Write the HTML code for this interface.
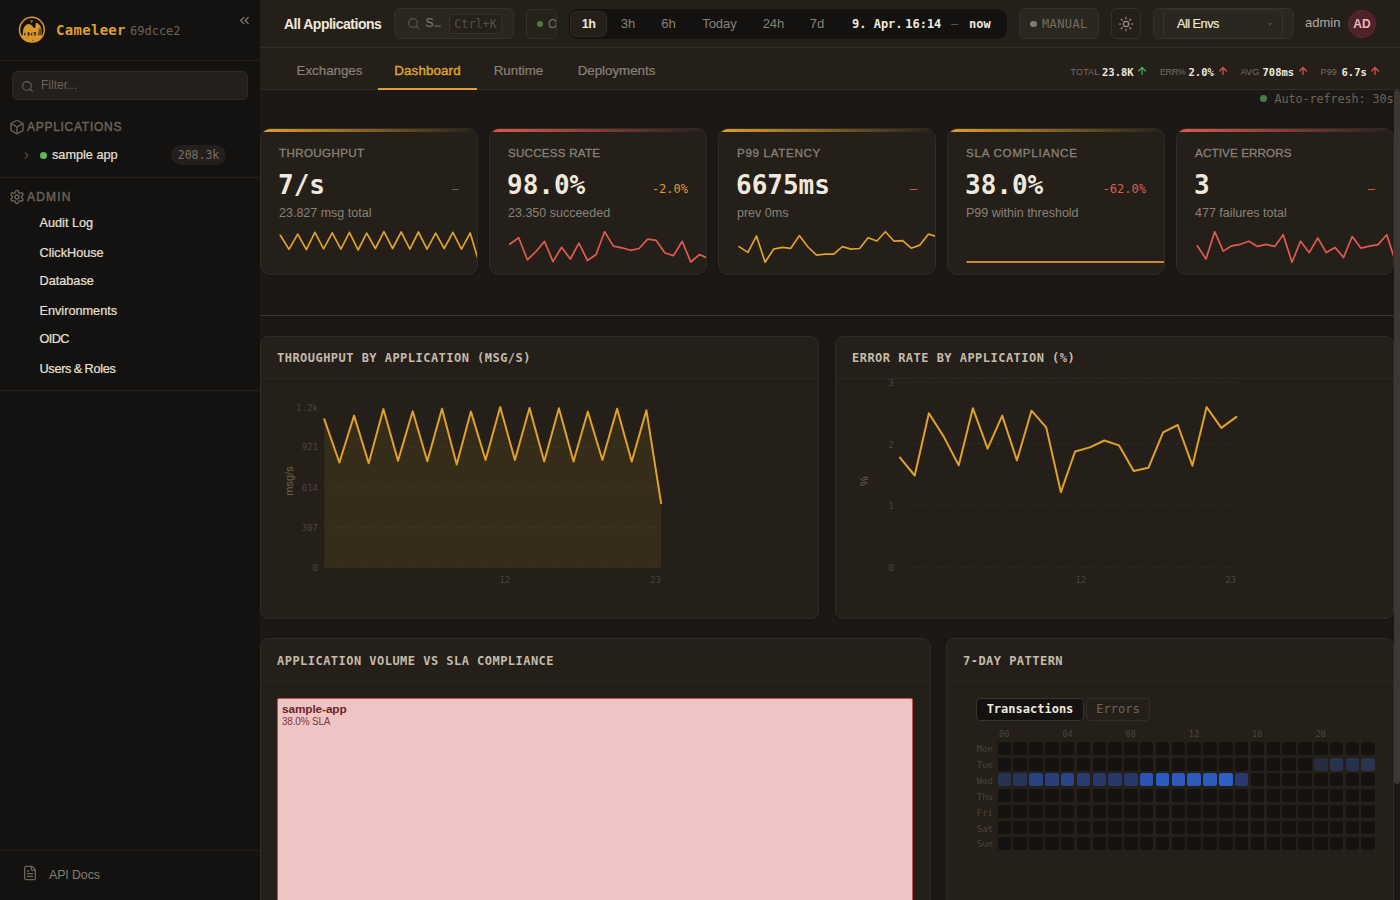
<!DOCTYPE html>
<html lang="en">
<head>
<meta charset="utf-8">
<title>Cameleer – Dashboard</title>
<style>
*{box-sizing:border-box;margin:0;padding:0}
html,body{width:1400px;height:900px;overflow:hidden;background:#1c1815;color:#f0e8dc;
  font-family:"Liberation Sans",sans-serif;font-size:13px;-webkit-font-smoothing:antialiased}
.mono{font-family:"DejaVu Sans Mono","Liberation Mono",monospace}
svg{display:block}
.abs{position:absolute}

/* ---------- sidebar ---------- */
#side{position:absolute;left:0;top:0;width:260px;height:900px;background:#141210}
#side .hdr{position:absolute;left:0;top:0;width:260px;height:61px;border-bottom:1px solid #221f1b}
#side .brand{position:absolute;left:56px;top:20px;font-size:14px;font-weight:bold;letter-spacing:.3px;color:#dfa02c;line-height:20px;white-space:nowrap}
#side .ver{position:absolute;left:130px;top:21px;font-size:12px;color:#6b6358;line-height:20px}
#side .filter{position:absolute;left:12px;top:71px;width:236px;height:29px;border:1px solid #2e2a25;border-radius:5px;background:#221f1c}
#side .filter span{position:absolute;left:28px;top:6px;font-size:12px;line-height:15px;color:#6b6358}
.sec{position:absolute;left:27px;font-size:12px;letter-spacing:1.2px;color:#6b6358;-webkit-text-stroke:.4px #6b6358;line-height:14px}
.nav{position:absolute;left:39.5px;font-size:12.7px;-webkit-text-stroke:.2px #e8e0d4;color:#e8e0d4;line-height:16px;white-space:nowrap}
.hr{position:absolute;left:0;width:260px;height:1px;background:#26221e}

/* ---------- top bar ---------- */
#top{position:absolute;left:260px;top:0;width:1140px;height:48px;background:#242019;border-bottom:1px solid #322d27}
#tabs{position:absolute;left:260px;top:48px;width:1140px;height:42px;background:#242019;border-bottom:1px solid #322d27}
.tab{position:absolute;top:0;height:42px;font-size:13.3px;line-height:45px;color:#8a8176;-webkit-text-stroke:.2px #8a8176;text-align:center;white-space:nowrap}
.tab.on{color:#dfa02c;border-bottom:2px solid #dfa02c;-webkit-text-stroke:.45px #dfa02c;letter-spacing:.15px}
.rng{top:15px;font-size:13px;line-height:18px;color:#8a8176;text-align:center}
.pill{position:absolute;border:1px solid #363029;border-radius:6px;background:#2a2620}

/* ---------- main ---------- */
#main{position:absolute;left:260px;top:90px;width:1134px;height:810px;overflow:hidden;background:#1c1815}
.card{position:absolute;background:#242019;border:1px solid #302b25;border-radius:8px;overflow:hidden;box-shadow:0 1px 3px rgba(0,0,0,.22)}
.card.kpi{border-radius:10px}

.kpi .acc{position:absolute;left:0;top:0;width:100%;height:3px}
.kl{position:absolute;left:18px;top:17px;font-size:11.6px;line-height:14px;color:#8a8176;letter-spacing:.75px;-webkit-text-stroke:.3px #8a8176;white-space:nowrap}
.kv{position:absolute;left:17px;top:40px;font-size:26px;line-height:32px;font-weight:bold;color:#f0e8dc;white-space:nowrap}
.kd{position:absolute;right:18px;top:53px;font-size:12px;line-height:14px;white-space:nowrap}
.ks{position:absolute;left:18px;top:77px;font-size:12.5px;line-height:15px;color:#8a8176;white-space:nowrap}
.ch{position:absolute;left:0;top:0;width:100%;height:42px;border-bottom:1px solid #2b2721;padding:14px 16px 14px;font-size:12px;line-height:14px;font-weight:bold;color:#c4bbab;letter-spacing:.47px;white-space:nowrap}
.ch2{height:43px;padding-top:15px}
.hl{position:absolute;font-size:9px;line-height:11px;color:#4a443c}
.hc{position:absolute;width:13.5px;height:13px;border-radius:2.5px;display:block}

.sl{top:18px;font-size:9px;line-height:12px;color:#756d62;letter-spacing:.15px;white-space:nowrap}
.sv{top:16px;font-size:10.5px;line-height:16px;color:#f0e8dc;font-weight:bold;white-space:nowrap}
</style>
</head>
<body>

<!-- ================= SIDEBAR ================= -->
<div id="side">
  <div class="hdr">
    <svg class="abs" style="left:18px;top:16px" width="28" height="28" viewBox="0 0 28 28">
      <defs><clipPath id="lc"><circle cx="13.9" cy="13.7" r="12.4"/></clipPath></defs>
      <circle cx="13.9" cy="13.7" r="12.4" fill="#15120e" stroke="#d9982e" stroke-width="1.5"/>
      <g clip-path="url(#lc)" fill="#d9982e">
        <rect x="0" y="19.4" width="28" height="9"/>
        <path d="M4.6 20.5 5 15.2C5.4 11.6 7.6 8.4 10.4 8.1c2.6-.2 4 2.2 5.4 3.9 1.2.2 1.7-.9 1.8-2.8l.1-2 1.5-.5.9 1.3c1.600.5 2.600 2.300 3 4l-1.400.6-1-.9c.100 2.400-.300 4.500-1 5.700l.100 3.200z"/>
        <path d="M19.800 12h4v8h-4.600z" fill-opacity=".5"/><path d="M13.700 3.400l.600 1.400 1.700.5-1.700.5-.600 1.400-.600-1.400-1.700-.5 1.700-.5z" fill-opacity=".8"/>
        <g fill="#15120e" fill-opacity=".85"><rect x="6.200" y="16.800" width="1.200" height="2.800"/><rect x="9.600" y="16.300" width="2" height="3.400"/><rect x="12.900" y="16.800" width="1.400" height="2.700"/><rect x="15.600" y="16" width="2.400" height="1.600"/><rect x="16" y="18.200" width="2" height="1.300"/><circle cx="14.800" cy="24.200" r=".5"/><circle cx="9" cy="21.200" r=".4"/></g>
      </g>
    </svg>
    <svg class="abs" style="left:237px;top:13px" width="15" height="15" viewBox="0 0 24 24" fill="none" stroke="#857c70" stroke-width="1.900" stroke-linecap="round" stroke-linejoin="round"><path d="m11 17-5-5 5-5"/><path d="m18 17-5-5 5-5"/></svg>
    <div class="brand mono">Cameleer</div>
    <div class="ver mono">69dcce2</div>
  </div>
  <div class="filter"><svg class="abs" style="left:8px;top:7.500px" width="13" height="13" viewBox="0 0 24 24" fill="none" stroke="#6b6358" stroke-width="2" stroke-linecap="round"><circle cx="11" cy="11" r="8"/><path d="m21 21-4.300-4.300"/></svg><span>Filter...</span></div>
  <svg class="abs" style="left:9px;top:119px" width="16" height="16" viewBox="0 0 24 24" fill="none" stroke="#6b6358" stroke-width="2" stroke-linecap="round" stroke-linejoin="round"><path d="M21 8a2 2 0 0 0-1-1.730l-7-4a2 2 0 0 0-2 0l-7 4A2 2 0 0 0 3 8v8a2 2 0 0 0 1 1.730l7 4a2 2 0 0 0 2 0l7-4A2 2 0 0 0 21 16Z"/><path d="m3.300 7 8.700 5 8.700-5"/><path d="M12 22V12"/></svg>
  <svg class="abs" style="left:21px;top:150px" width="11" height="11" viewBox="0 0 24 24" fill="none" stroke="#6b6358" stroke-width="2.200" stroke-linecap="round" stroke-linejoin="round"><path d="m9 18 6-6-6-6"/></svg>
  <span class="abs" style="left:39.700px;top:152.300px;width:7px;height:7px;border-radius:50%;background:#5cb85c"></span>
  <span class="abs mono" style="left:171px;top:145px;width:55px;height:20px;border-radius:10px;background:#221f1c;color:#7a7268;font-size:11.500px;line-height:20px;text-align:center">208.3k</span>
  <svg class="abs" style="left:9px;top:189px" width="16" height="16" viewBox="0 0 24 24" fill="none" stroke="#6b6358" stroke-width="2" stroke-linecap="round" stroke-linejoin="round"><path d="M12.220 2h-.440a2 2 0 0 0-2 2v.180a2 2 0 0 1-1 1.730l-.430.250a2 2 0 0 1-2 0l-.150-.080a2 2 0 0 0-2.730.730l-.220.380a2 2 0 0 0 .730 2.730l.150.100a2 2 0 0 1 1 1.720v.510a2 2 0 0 1-1 1.740l-.150.090a2 2 0 0 0-.730 2.730l.220.380a2 2 0 0 0 2.730.730l.150-.080a2 2 0 0 1 2 0l.430.250a2 2 0 0 1 1 1.730V20a2 2 0 0 0 2 2h.440a2 2 0 0 0 2-2v-.180a2 2 0 0 1 1-1.730l.430-.250a2 2 0 0 1 2 0l.150.080a2 2 0 0 0 2.730-.730l.220-.390a2 2 0 0 0-.730-2.730l-.150-.080a2 2 0 0 1-1-1.740v-.500a2 2 0 0 1 1-1.740l.150-.090a2 2 0 0 0 .730-2.730l-.220-.380a2 2 0 0 0-2.730-.730l-.150.080a2 2 0 0 1-2 0l-.430-.250a2 2 0 0 1-1-1.730V4a2 2 0 0 0-2-2z"/><circle cx="12" cy="12" r="3"/></svg>
  <svg class="abs" style="left:22px;top:865px" width="16" height="16" viewBox="0 0 24 24" fill="none" stroke="#6b6358" stroke-width="2" stroke-linecap="round" stroke-linejoin="round"><path d="M15 2H6a2 2 0 0 0-2 2v16a2 2 0 0 0 2 2h12a2 2 0 0 0 2-2V7Z"/><path d="M14 2v4a2 2 0 0 0 2 2h4"/><path d="M10 9H8"/><path d="M16 13H8"/><path d="M16 17H8"/></svg>
  <div class="sec" style="top:120px;letter-spacing:.72px">APPLICATIONS</div>
  <div class="nav" style="left:52px;top:147px">sample app</div>
  <div class="hr" style="top:177px"></div>
  <div class="sec" style="top:190px">ADMIN</div>
  <div class="nav" style="top:215px">Audit Log</div>
  <div class="nav" style="top:245px">ClickHouse</div>
  <div class="nav" style="top:273px">Database</div>
  <div class="nav" style="top:303px">Environments</div>
  <div class="nav" style="top:331px;letter-spacing:-.6px">OIDC</div>
  <div class="nav" style="top:361px;word-spacing:-.6px;letter-spacing:-.3px">Users &amp; Roles</div>
  <div class="hr" style="top:390px"></div>
  <div class="hr" style="top:850px;background:#211e1a"></div>
  <div class="nav" style="left:49px;top:867px;color:#857c70;-webkit-text-stroke:0;font-size:12.400px;letter-spacing:-.1px">API Docs</div>
</div>

<!-- ================= TOP BAR ================= -->
<div id="top">
  <div class="abs" style="left:24px;top:14px;font-size:14px;font-weight:bold;color:#f0e8dc;line-height:20px;letter-spacing:-0.5px;white-space:nowrap">All Applications</div>
  <!-- search -->
  <div class="pill" style="left:134px;top:8px;width:120px;height:31px">
    <svg class="abs" style="left:11.800px;top:8.300px" width="13" height="13" viewBox="0 0 24 24" fill="none" stroke="#5e574e" stroke-width="2" stroke-linecap="round"><circle cx="11" cy="11" r="8"/><path d="M21 21l-4.3-4.3"/></svg>
    <span class="abs" style="left:30.500px;top:7px;font-size:12px;line-height:15px;color:#7d756a;-webkit-text-stroke:.2px #7d756a">S<span style="letter-spacing:-1.100px">...</span></span>
    <span class="abs mono" style="left:54px;top:5px;width:53px;height:20px;border:1px solid #37312a;border-radius:4px;background:#252119;color:#574f45;font-size:11.800px;line-height:19px;text-align:center;letter-spacing:0">Ctrl+K</span>
  </div>
  <!-- status -->
  <div class="pill" style="left:266px;top:9px;width:31px;height:30px;overflow:hidden;background:#262219">
    <span class="abs" style="left:9.500px;top:10.800px;width:6.400px;height:6.400px;border-radius:50%;background:#4c7a48"></span>
    <span class="abs" style="left:21px;top:7px;font-size:12px;line-height:15px;color:#7a7268">OK</span>
  </div>
  <!-- range -->
  <div class="abs" style="left:309px;top:9px;width:438px;height:30px;border-radius:9px;background:#141210"></div>
  <div class="abs" style="left:310px;top:11px;width:37px;height:26px;border-radius:7px;background:#242019;border:1px solid #322d27"></div>
  <div class="abs rng" style="left:310px;width:37px;color:#f0e8dc;font-weight:bold;font-size:12.500px;letter-spacing:-.5px">1h</div>
  <div class="abs rng" style="left:348px;width:40px">3h</div>
  <div class="abs rng" style="left:388px;width:41px">6h</div>
  <div class="abs rng" style="left:429px;width:61px">Today</div>
  <div class="abs rng" style="left:490px;width:47px">24h</div>
  <div class="abs rng" style="left:537px;width:40px">7d</div>
  <div class="abs mono" style="left:592px;top:16px;font-size:12px;line-height:16px;font-weight:bold;color:#f0e8dc;white-space:pre">9. Apr.<span style="letter-spacing:-4.6px"> </span>16:14</div>
  <div class="abs mono" style="left:691px;top:16px;font-size:12px;line-height:16px;color:#5e574e">–</div>
  <div class="abs mono" style="left:709px;top:16px;font-size:12px;line-height:16px;font-weight:bold;color:#f0e8dc">now</div>
  <!-- manual -->
  <div class="pill" style="left:759px;top:8px;width:80px;height:31px">
    <span class="abs" style="left:10px;top:11.500px;width:6.500px;height:6.500px;border-radius:50%;background:#857c70"></span>
    <span class="abs mono" style="left:22px;top:7px;font-size:12px;line-height:16px;color:#756d62;letter-spacing:.4px">MANUAL</span>
  </div>
  <!-- theme -->
  <div class="pill" style="left:851px;top:8px;width:30px;height:31px;background:#242019">
    <svg class="abs" style="left:6px;top:7px" width="16" height="16" viewBox="0 0 24 24" fill="none" stroke="#9a9184" stroke-width="1.800" stroke-linecap="round"><circle cx="12" cy="12" r="4"/><path d="M12 2v2M12 20v2M4.93 4.93l1.41 1.41M17.66 17.66l1.41 1.41M2 12h2M20 12h2M6.34 17.66l-1.41 1.41M19.07 4.93l-1.41 1.41"/></svg>
  </div>
  <!-- env -->
  <div class="pill" style="left:893px;top:8px;width:141px;height:31px;background:#2a2620"></div>
  <div class="pill" style="left:903px;top:9px;width:120px;height:29.500px;background:#2a2620;border-color:#3a342c">
    <span class="abs" style="left:13px;top:6px;font-size:12.700px;line-height:16px;color:#f0e8dc;letter-spacing:-0.500px;-webkit-text-stroke:.2px #f0e8dc">All Envs</span>
    <span class="abs" style="left:103.500px;top:12.500px;width:0;height:0;border-left:2.500px solid transparent;border-right:2.500px solid transparent;border-top:3.500px solid #514a41"></span>
  </div>
  <div class="abs" style="left:1045px;top:14px;font-size:13px;line-height:18px;color:#b5ac9e">admin</div>
  <div class="abs" style="left:1088px;top:10px;width:28px;height:28px;border-radius:50%;background:#4d2228;border:1px solid #5e292f;color:#efb6b6;font-size:12px;font-weight:bold;line-height:26px;text-align:center">AD</div>
</div>

<!-- ================= TABS ================= -->
<div id="tabs">
  <div class="tab" style="left:21px;width:97px">Exchanges</div>
  <div class="tab on" style="left:118px;width:99px">Dashboard</div>
  <div class="tab" style="left:217px;width:83px">Runtime</div>
  <div class="tab" style="left:300px;width:113px">Deployments</div>
  <div class="abs sl" style="left:810.5px">TOTAL</div><div class="abs sv mono" style="left:842px">23.8K</div><svg class="abs" style="left:876px;top:17px" width="12" height="12" viewBox="0 0 24 24" fill="none" stroke="#4caf50" stroke-width="2.400" stroke-linecap="round" stroke-linejoin="round"><path d="m5 12 7-7 7 7"/><path d="M12 19V5"/></svg>
  <div class="abs sl" style="left:900px;letter-spacing:-0.4px">ERR%</div><div class="abs sv mono" style="left:928.5px">2.0%</div><svg class="abs" style="left:956.5px;top:17px" width="12" height="12" viewBox="0 0 24 24" fill="none" stroke="#e8524a" stroke-width="2.400" stroke-linecap="round" stroke-linejoin="round"><path d="m5 12 7-7 7 7"/><path d="M12 19V5"/></svg>
  <div class="abs sl" style="left:980.5px">AVG</div><div class="abs sv mono" style="left:1002.5px">708ms</div><svg class="abs" style="left:1036.5px;top:17px" width="12" height="12" viewBox="0 0 24 24" fill="none" stroke="#e8524a" stroke-width="2.400" stroke-linecap="round" stroke-linejoin="round"><path d="m5 12 7-7 7 7"/><path d="M12 19V5"/></svg>
  <div class="abs sl" style="left:1060.5px">P99</div><div class="abs sv mono" style="left:1081.5px">6.7s</div><svg class="abs" style="left:1109px;top:17px" width="12" height="12" viewBox="0 0 24 24" fill="none" stroke="#e8524a" stroke-width="2.400" stroke-linecap="round" stroke-linejoin="round"><path d="m5 12 7-7 7 7"/><path d="M12 19V5"/></svg>
</div>

<!-- ================= MAIN ================= -->
<div id="main">
<div class="abs mono" style="right:.5px;top:1.5px;font-size:11.8px;line-height:14px;color:#6b6358;white-space:nowrap;letter-spacing:-0.1px"><span style="display:inline-block;width:7px;height:7px;border-radius:50%;background:#4c7a48;margin-right:7px;vertical-align:.5px"></span>Auto-refresh: 30s</div>
<div class="card kpi" style="left:0px;top:38px;width:218px;height:147px">
<div class="acc" style="background:linear-gradient(90deg,#dfa02c 0%,#dfa02c00 100%)"></div>
<div class="kl" style="letter-spacing:0.37px">THROUGHPUT</div><div class="kv mono">7/s</div><div class="kd mono" style="color:#6b6358">–</div><div class="ks">23.827 msg total</div>
<svg class="abs" style="left:0;top:0" width="218" height="147" ><polyline points="19.3,106.3 28.0,120.4 36.7,105.1 45.4,120.6 53.9,103.3 62.6,119.8 71.2,103.8 79.9,120.1 88.4,103.3 97.1,121.0 105.7,104.2 114.4,119.5 122.9,102.7 131.6,119.5 140.2,103.0 148.9,120.2 157.4,103.0 166.0,120.1 174.7,104.2 183.2,119.5 191.9,103.3 200.5,120.2 209.2,103.9 217.9,133.3" fill="none" stroke="#dfa02c" stroke-width="1.7" stroke-linejoin="round" stroke-linecap="round"/></svg>
</div>
<div class="card kpi" style="left:229px;top:38px;width:218px;height:147px">
<div class="acc" style="background:linear-gradient(90deg,#e05a4f 0%,#e05a4f00 100%)"></div>
<div class="kl" style="letter-spacing:0.24px">SUCCESS RATE</div><div class="kv mono">98.0%</div><div class="kd mono" style="color:#e5962f">-2.0%</div><div class="ks">23.350 succeeded</div>
<svg class="abs" style="left:0;top:0" width="218" height="147" ><polyline points="19.7,115.3 28.7,108.7 37.4,130.8 46.0,122.5 54.5,112.4 63.0,132.6 71.6,118.3 80.3,130.0 88.9,114.1 97.5,131.5 106.1,125.5 114.6,102.7 123.4,117.1 131.9,118.8 140.6,121.3 149.1,119.5 157.7,110.2 166.2,111.4 175.0,124.0 183.5,126.6 192.2,112.3 200.8,133.0 209.5,125.5 218.0,129.4" fill="none" stroke="#e05a4f" stroke-width="1.7" stroke-linejoin="round" stroke-linecap="round"/></svg>
</div>
<div class="card kpi" style="left:458px;top:38px;width:218px;height:147px">
<div class="acc" style="background:linear-gradient(90deg,#dfa02c 0%,#dfa02c00 100%)"></div>
<div class="kl" style="letter-spacing:0.68px">P99 LATENCY</div><div class="kv mono">6675ms</div><div class="kd mono" style="color:#e05a4f">–</div><div class="ks">prev 0ms</div>
<svg class="abs" style="left:0;top:0" width="218" height="147" ><polyline points="20.0,117.6 28.9,123.4 37.5,106.9 46.1,133.3 54.6,120.2 63.2,118.4 71.8,119.3 80.3,106.6 89.0,118.0 97.5,126.1 106.1,125.1 114.8,125.2 123.4,117.6 132.0,120.1 140.6,119.5 149.1,108.7 157.9,112.0 166.4,102.7 175.1,112.2 183.6,111.6 192.2,119.2 200.9,116.1 209.5,105.1 218.0,107.8" fill="none" stroke="#dfa02c" stroke-width="1.7" stroke-linejoin="round" stroke-linecap="round"/></svg>
</div>
<div class="card kpi" style="left:687px;top:38px;width:218px;height:147px">
<div class="acc" style="background:linear-gradient(90deg,#dfa02c 0%,#dfa02c00 100%)"></div>
<div class="kl" style="letter-spacing:0.75px">SLA COMPLIANCE</div><div class="kv mono">38.0%</div><div class="kd mono" style="color:#e05a4f">-62.0%</div><div class="ks">P99 within threshold</div>
<svg class="abs" style="left:0;top:0" width="218" height="147" ><line x1="18.5" x2="218" y1="132.9" y2="132.9" stroke="#c98a28" stroke-width="2"/></svg>
</div>
<div class="card kpi" style="left:916px;top:38px;width:218px;height:147px">
<div class="acc" style="background:linear-gradient(90deg,#e05a4f 0%,#e05a4f00 100%)"></div>
<div class="kl" style="letter-spacing:0.15px">ACTIVE ERRORS</div><div class="kv mono">3</div><div class="kd mono" style="color:#e05a4f">–</div><div class="ks">477 failures total</div>
<svg class="abs" style="left:0;top:0" width="218" height="147" ><polyline transform="translate(1,0)" points="19.3,116.8 28.0,130.0 36.7,102.7 45.2,122.1 53.8,116.8 62.3,115.3 70.9,112.3 79.5,117.4 88.2,115.4 96.7,117.4 105.2,105.7 114.0,133.3 122.5,112.3 131.2,123.6 139.8,109.0 148.3,123.6 157.0,118.4 165.5,128.5 174.2,107.5 182.8,119.1 191.5,117.2 200.0,115.6 208.8,105.7 217.5,133.3" fill="none" stroke="#e05a4f" stroke-width="1.7" stroke-linejoin="round" stroke-linecap="round"/></svg>
</div>
<div class="abs" style="left:0;top:225px;width:1134px;height:1px;background:#38332c"></div>
<div class="card" style="left:0;top:246px;width:559px;height:283px"><div class="ch mono">THROUGHPUT BY APPLICATION (MSG/S)</div></div>
<div class="card" style="left:575px;top:246px;width:559px;height:283px"><div class="ch mono">ERROR RATE BY APPLICATION (%)</div></div>
<svg class="abs" style="left:0;top:246px" width="1134" height="283" viewBox="0 246 1134 283" font-family="DejaVu Sans Mono, Liberation Mono, monospace" font-size="9"><line x1="64.3" x2="398" y1="317.9" y2="317.9" stroke="#312c25" stroke-width="1" stroke-dasharray="3 3"/><text x="58" y="320.9" text-anchor="end" fill="#4a443c">1.2k</text><line x1="64.3" x2="398" y1="357.4" y2="357.4" stroke="#312c25" stroke-width="1" stroke-dasharray="3 3"/><text x="58" y="360.4" text-anchor="end" fill="#4a443c">921</text><line x1="64.3" x2="398" y1="397.7" y2="397.7" stroke="#312c25" stroke-width="1" stroke-dasharray="3 3"/><text x="58" y="400.7" text-anchor="end" fill="#4a443c">614</text><line x1="64.3" x2="398" y1="437.6" y2="437.6" stroke="#312c25" stroke-width="1" stroke-dasharray="3 3"/><text x="58" y="440.6" text-anchor="end" fill="#4a443c">307</text><line x1="64.3" x2="398" y1="477.5" y2="477.5" stroke="#312c25" stroke-width="1" stroke-dasharray="3 3"/><text x="58" y="480.5" text-anchor="end" fill="#4a443c">0</text><polygon points="64.3,329.3 79.4,372.5 94.1,325.6 108.7,373.3 123.4,319.1 138.0,370.8 152.7,321.2 167.3,371.2 182.0,318.7 196.7,374.5 210.9,321.6 225.6,370.0 240.2,317.1 254.9,370.0 269.5,317.9 284.2,371.6 298.9,318.3 313.5,371.6 327.8,321.6 342.4,370.0 357.1,318.7 371.7,371.6 386.4,320.3 401.1,413.2 401.1,477.5 64.3,477.5" fill="#dfa02c" fill-opacity="0.098"/><polyline points="64.3,329.3 79.4,372.5 94.1,325.6 108.7,373.3 123.4,319.1 138.0,370.8 152.7,321.2 167.3,371.2 182.0,318.7 196.7,374.5 210.9,321.6 225.6,370.0 240.2,317.1 254.9,370.0 269.5,317.9 284.2,371.6 298.9,318.3 313.5,371.6 327.8,321.6 342.4,370.0 357.1,318.7 371.7,371.6 386.4,320.3 401.1,413.2" fill="none" stroke="#dfa02c" stroke-width="2" stroke-linejoin="round" stroke-linecap="round"/><text x="245" y="493" text-anchor="middle" fill="#4a443c">12</text><text x="395.4" y="493" text-anchor="middle" fill="#4a443c">23</text><text transform="translate(33,391) rotate(-90)" text-anchor="middle" font-family="Liberation Sans, sans-serif" font-size="11" fill="#6b6358">msg/s</text><line x1="640" x2="973" y1="292.0" y2="292.0" stroke="#312c25" stroke-width="1" stroke-dasharray="3 3"/><text x="634" y="295.7" text-anchor="end" fill="#4a443c">3</text><line x1="640" x2="973" y1="353.8" y2="353.8" stroke="#312c25" stroke-width="1" stroke-dasharray="3 3"/><text x="634" y="357.5" text-anchor="end" fill="#4a443c">2</text><line x1="640" x2="973" y1="415.3" y2="415.3" stroke="#312c25" stroke-width="1" stroke-dasharray="3 3"/><text x="634" y="419" text-anchor="end" fill="#4a443c">1</text><line x1="640" x2="973" y1="477.2" y2="477.2" stroke="#312c25" stroke-width="1" stroke-dasharray="3 3"/><text x="634" y="480.9" text-anchor="end" fill="#4a443c">0</text><polyline points="640.0,367.6 654.7,385.5 668.9,323.2 683.6,346.4 698.7,375.3 712.9,318.3 727.6,358.6 742.2,325.6 756.9,370.4 771.5,320.7 786.2,337.4 800.9,402.2 815.1,361.5 829.8,357.4 844.4,350.5 859.1,355.4 873.7,381.0 888.4,377.8 903.1,342.3 917.7,335.0 932.4,375.7 946.6,317.1 961.3,337.9 976.4,326.9" fill="none" stroke="#dfa02c" stroke-width="2" stroke-linejoin="round" stroke-linecap="round"/><text x="820.8" y="493" text-anchor="middle" fill="#4a443c">12</text><text x="970.7" y="493" text-anchor="middle" fill="#4a443c">23</text><text transform="translate(608,391) rotate(-90)" text-anchor="middle" font-family="Liberation Sans, sans-serif" font-size="11" fill="#6b6358">%</text></svg>
<div class="card" style="left:0;top:548px;width:671px;height:301px"><div class="ch ch2 mono">APPLICATION VOLUME VS SLA COMPLIANCE</div><div class="abs" style="left:16px;top:59px;width:636px;height:260px;background:#efc4c4;border:1px solid #b9554c;border-radius:2px"><div class="abs" style="left:4px;top:2.500px;font-size:11.800px;font-weight:bold;color:#6b2626;line-height:14px;letter-spacing:-0.1px">sample-app</div><div class="abs" style="left:4px;top:17px;font-size:10px;color:#7c3a3a;line-height:12px;letter-spacing:-0.2px">38.0% SLA</div></div></div>
<div class="card" style="left:686px;top:548px;width:448px;height:301px"><div class="ch ch2 mono">7-DAY PATTERN</div><div class="abs mono" style="left:29px;top:59px;width:108px;height:23px;border:1px solid #3a342c;border-radius:4px;background:#141210;color:#f0e8dc;font-weight:bold;font-size:12px;line-height:21px;text-align:center">Transactions</div><div class="abs mono" style="left:139px;top:59px;width:64px;height:23px;border:1px solid #322d27;border-radius:4px;color:#6b6358;font-size:12px;line-height:21px;text-align:center">Errors</div><div class="abs mono hl" style="left:47.2px;top:90px;width:20px;text-align:center;font-size:8.6px">00</div><div class="abs mono hl" style="left:110.5px;top:90px;width:20px;text-align:center;font-size:8.6px">04</div><div class="abs mono hl" style="left:173.8px;top:90px;width:20px;text-align:center;font-size:8.6px">08</div><div class="abs mono hl" style="left:237.0px;top:90px;width:20px;text-align:center;font-size:8.6px">12</div><div class="abs mono hl" style="left:300.3px;top:90px;width:20px;text-align:center;font-size:8.6px">16</div><div class="abs mono hl" style="left:363.6px;top:90px;width:20px;text-align:center;font-size:8.6px">20</div><div class="abs mono hl" style="left:20px;top:105.4px;width:26px;text-align:right">Mon</div><i class="hc" style="left:50.60px;top:102.8px;background:#15130f"></i><i class="hc" style="left:66.42px;top:102.8px;background:#15130f"></i><i class="hc" style="left:82.24px;top:102.8px;background:#15130f"></i><i class="hc" style="left:98.06px;top:102.8px;background:#15130f"></i><i class="hc" style="left:113.88px;top:102.8px;background:#15130f"></i><i class="hc" style="left:129.70px;top:102.8px;background:#15130f"></i><i class="hc" style="left:145.52px;top:102.8px;background:#15130f"></i><i class="hc" style="left:161.34px;top:102.8px;background:#15130f"></i><i class="hc" style="left:177.16px;top:102.8px;background:#15130f"></i><i class="hc" style="left:192.98px;top:102.8px;background:#15130f"></i><i class="hc" style="left:208.80px;top:102.8px;background:#15130f"></i><i class="hc" style="left:224.62px;top:102.8px;background:#15130f"></i><i class="hc" style="left:240.44px;top:102.8px;background:#15130f"></i><i class="hc" style="left:256.26px;top:102.8px;background:#15130f"></i><i class="hc" style="left:272.08px;top:102.8px;background:#15130f"></i><i class="hc" style="left:287.90px;top:102.8px;background:#15130f"></i><i class="hc" style="left:303.72px;top:102.8px;background:#15130f"></i><i class="hc" style="left:319.54px;top:102.8px;background:#15130f"></i><i class="hc" style="left:335.36px;top:102.8px;background:#15130f"></i><i class="hc" style="left:351.18px;top:102.8px;background:#15130f"></i><i class="hc" style="left:367.00px;top:102.8px;background:#15130f"></i><i class="hc" style="left:382.82px;top:102.8px;background:#15130f"></i><i class="hc" style="left:398.64px;top:102.8px;background:#15130f"></i><i class="hc" style="left:414.46px;top:102.8px;background:#15130f"></i><div class="abs mono hl" style="left:20px;top:121.2px;width:26px;text-align:right">Tue</div><i class="hc" style="left:50.60px;top:118.63px;background:#15130f"></i><i class="hc" style="left:66.42px;top:118.63px;background:#15130f"></i><i class="hc" style="left:82.24px;top:118.63px;background:#15130f"></i><i class="hc" style="left:98.06px;top:118.63px;background:#15130f"></i><i class="hc" style="left:113.88px;top:118.63px;background:#15130f"></i><i class="hc" style="left:129.70px;top:118.63px;background:#15130f"></i><i class="hc" style="left:145.52px;top:118.63px;background:#15130f"></i><i class="hc" style="left:161.34px;top:118.63px;background:#15130f"></i><i class="hc" style="left:177.16px;top:118.63px;background:#15130f"></i><i class="hc" style="left:192.98px;top:118.63px;background:#15130f"></i><i class="hc" style="left:208.80px;top:118.63px;background:#15130f"></i><i class="hc" style="left:224.62px;top:118.63px;background:#15130f"></i><i class="hc" style="left:240.44px;top:118.63px;background:#15130f"></i><i class="hc" style="left:256.26px;top:118.63px;background:#15130f"></i><i class="hc" style="left:272.08px;top:118.63px;background:#15130f"></i><i class="hc" style="left:287.90px;top:118.63px;background:#15130f"></i><i class="hc" style="left:303.72px;top:118.63px;background:#15130f"></i><i class="hc" style="left:319.54px;top:118.63px;background:#15130f"></i><i class="hc" style="left:335.36px;top:118.63px;background:#15130f"></i><i class="hc" style="left:351.18px;top:118.63px;background:#15130f"></i><i class="hc" style="left:367.00px;top:118.63px;background:#272c3e"></i><i class="hc" style="left:382.82px;top:118.63px;background:#29324e"></i><i class="hc" style="left:398.64px;top:118.63px;background:#28314b"></i><i class="hc" style="left:414.46px;top:118.63px;background:#2a3451"></i><div class="abs mono hl" style="left:20px;top:137.1px;width:26px;text-align:right">Wed</div><i class="hc" style="left:50.60px;top:134.46px;background:#27334f"></i><i class="hc" style="left:66.42px;top:134.46px;background:#273657"></i><i class="hc" style="left:82.24px;top:134.46px;background:#2a4383"></i><i class="hc" style="left:98.06px;top:134.46px;background:#2a3f7a"></i><i class="hc" style="left:113.88px;top:134.46px;background:#2b4487"></i><i class="hc" style="left:129.70px;top:134.46px;background:#293c72"></i><i class="hc" style="left:145.52px;top:134.46px;background:#28386a"></i><i class="hc" style="left:161.34px;top:134.46px;background:#28386a"></i><i class="hc" style="left:177.16px;top:134.46px;background:#28376a"></i><i class="hc" style="left:192.98px;top:134.46px;background:#2d55b0"></i><i class="hc" style="left:208.80px;top:134.46px;background:#2d5cc0"></i><i class="hc" style="left:224.62px;top:134.46px;background:#2d5abc"></i><i class="hc" style="left:240.44px;top:134.46px;background:#2d5abb"></i><i class="hc" style="left:256.26px;top:134.46px;background:#2d5bbd"></i><i class="hc" style="left:272.08px;top:134.46px;background:#2e60c8"></i><i class="hc" style="left:287.90px;top:134.46px;background:#283a6e"></i><i class="hc" style="left:303.72px;top:134.46px;background:#15130f"></i><i class="hc" style="left:319.54px;top:134.46px;background:#15130f"></i><i class="hc" style="left:335.36px;top:134.46px;background:#15130f"></i><i class="hc" style="left:351.18px;top:134.46px;background:#15130f"></i><i class="hc" style="left:367.00px;top:134.46px;background:#15130f"></i><i class="hc" style="left:382.82px;top:134.46px;background:#15130f"></i><i class="hc" style="left:398.64px;top:134.46px;background:#15130f"></i><i class="hc" style="left:414.46px;top:134.46px;background:#15130f"></i><div class="abs mono hl" style="left:20px;top:152.9px;width:26px;text-align:right">Thu</div><i class="hc" style="left:50.60px;top:150.29px;background:#15130f"></i><i class="hc" style="left:66.42px;top:150.29px;background:#15130f"></i><i class="hc" style="left:82.24px;top:150.29px;background:#15130f"></i><i class="hc" style="left:98.06px;top:150.29px;background:#15130f"></i><i class="hc" style="left:113.88px;top:150.29px;background:#15130f"></i><i class="hc" style="left:129.70px;top:150.29px;background:#15130f"></i><i class="hc" style="left:145.52px;top:150.29px;background:#15130f"></i><i class="hc" style="left:161.34px;top:150.29px;background:#15130f"></i><i class="hc" style="left:177.16px;top:150.29px;background:#15130f"></i><i class="hc" style="left:192.98px;top:150.29px;background:#15130f"></i><i class="hc" style="left:208.80px;top:150.29px;background:#15130f"></i><i class="hc" style="left:224.62px;top:150.29px;background:#15130f"></i><i class="hc" style="left:240.44px;top:150.29px;background:#15130f"></i><i class="hc" style="left:256.26px;top:150.29px;background:#15130f"></i><i class="hc" style="left:272.08px;top:150.29px;background:#15130f"></i><i class="hc" style="left:287.90px;top:150.29px;background:#15130f"></i><i class="hc" style="left:303.72px;top:150.29px;background:#15130f"></i><i class="hc" style="left:319.54px;top:150.29px;background:#15130f"></i><i class="hc" style="left:335.36px;top:150.29px;background:#15130f"></i><i class="hc" style="left:351.18px;top:150.29px;background:#15130f"></i><i class="hc" style="left:367.00px;top:150.29px;background:#15130f"></i><i class="hc" style="left:382.82px;top:150.29px;background:#15130f"></i><i class="hc" style="left:398.64px;top:150.29px;background:#15130f"></i><i class="hc" style="left:414.46px;top:150.29px;background:#15130f"></i><div class="abs mono hl" style="left:20px;top:168.7px;width:26px;text-align:right">Fri</div><i class="hc" style="left:50.60px;top:166.12px;background:#15130f"></i><i class="hc" style="left:66.42px;top:166.12px;background:#15130f"></i><i class="hc" style="left:82.24px;top:166.12px;background:#15130f"></i><i class="hc" style="left:98.06px;top:166.12px;background:#15130f"></i><i class="hc" style="left:113.88px;top:166.12px;background:#15130f"></i><i class="hc" style="left:129.70px;top:166.12px;background:#15130f"></i><i class="hc" style="left:145.52px;top:166.12px;background:#15130f"></i><i class="hc" style="left:161.34px;top:166.12px;background:#15130f"></i><i class="hc" style="left:177.16px;top:166.12px;background:#15130f"></i><i class="hc" style="left:192.98px;top:166.12px;background:#15130f"></i><i class="hc" style="left:208.80px;top:166.12px;background:#15130f"></i><i class="hc" style="left:224.62px;top:166.12px;background:#15130f"></i><i class="hc" style="left:240.44px;top:166.12px;background:#15130f"></i><i class="hc" style="left:256.26px;top:166.12px;background:#15130f"></i><i class="hc" style="left:272.08px;top:166.12px;background:#15130f"></i><i class="hc" style="left:287.90px;top:166.12px;background:#15130f"></i><i class="hc" style="left:303.72px;top:166.12px;background:#15130f"></i><i class="hc" style="left:319.54px;top:166.12px;background:#15130f"></i><i class="hc" style="left:335.36px;top:166.12px;background:#15130f"></i><i class="hc" style="left:351.18px;top:166.12px;background:#15130f"></i><i class="hc" style="left:367.00px;top:166.12px;background:#15130f"></i><i class="hc" style="left:382.82px;top:166.12px;background:#15130f"></i><i class="hc" style="left:398.64px;top:166.12px;background:#15130f"></i><i class="hc" style="left:414.46px;top:166.12px;background:#15130f"></i><div class="abs mono hl" style="left:20px;top:184.5px;width:26px;text-align:right">Sat</div><i class="hc" style="left:50.60px;top:181.95px;background:#15130f"></i><i class="hc" style="left:66.42px;top:181.95px;background:#15130f"></i><i class="hc" style="left:82.24px;top:181.95px;background:#15130f"></i><i class="hc" style="left:98.06px;top:181.95px;background:#15130f"></i><i class="hc" style="left:113.88px;top:181.95px;background:#15130f"></i><i class="hc" style="left:129.70px;top:181.95px;background:#15130f"></i><i class="hc" style="left:145.52px;top:181.95px;background:#15130f"></i><i class="hc" style="left:161.34px;top:181.95px;background:#15130f"></i><i class="hc" style="left:177.16px;top:181.95px;background:#15130f"></i><i class="hc" style="left:192.98px;top:181.95px;background:#15130f"></i><i class="hc" style="left:208.80px;top:181.95px;background:#15130f"></i><i class="hc" style="left:224.62px;top:181.95px;background:#15130f"></i><i class="hc" style="left:240.44px;top:181.95px;background:#15130f"></i><i class="hc" style="left:256.26px;top:181.95px;background:#15130f"></i><i class="hc" style="left:272.08px;top:181.95px;background:#15130f"></i><i class="hc" style="left:287.90px;top:181.95px;background:#15130f"></i><i class="hc" style="left:303.72px;top:181.95px;background:#15130f"></i><i class="hc" style="left:319.54px;top:181.95px;background:#15130f"></i><i class="hc" style="left:335.36px;top:181.95px;background:#15130f"></i><i class="hc" style="left:351.18px;top:181.95px;background:#15130f"></i><i class="hc" style="left:367.00px;top:181.95px;background:#15130f"></i><i class="hc" style="left:382.82px;top:181.95px;background:#15130f"></i><i class="hc" style="left:398.64px;top:181.95px;background:#15130f"></i><i class="hc" style="left:414.46px;top:181.95px;background:#15130f"></i><div class="abs mono hl" style="left:20px;top:200.4px;width:26px;text-align:right">Sun</div><i class="hc" style="left:50.60px;top:197.78px;background:#15130f"></i><i class="hc" style="left:66.42px;top:197.78px;background:#15130f"></i><i class="hc" style="left:82.24px;top:197.78px;background:#15130f"></i><i class="hc" style="left:98.06px;top:197.78px;background:#15130f"></i><i class="hc" style="left:113.88px;top:197.78px;background:#15130f"></i><i class="hc" style="left:129.70px;top:197.78px;background:#15130f"></i><i class="hc" style="left:145.52px;top:197.78px;background:#15130f"></i><i class="hc" style="left:161.34px;top:197.78px;background:#15130f"></i><i class="hc" style="left:177.16px;top:197.78px;background:#15130f"></i><i class="hc" style="left:192.98px;top:197.78px;background:#15130f"></i><i class="hc" style="left:208.80px;top:197.78px;background:#15130f"></i><i class="hc" style="left:224.62px;top:197.78px;background:#15130f"></i><i class="hc" style="left:240.44px;top:197.78px;background:#15130f"></i><i class="hc" style="left:256.26px;top:197.78px;background:#15130f"></i><i class="hc" style="left:272.08px;top:197.78px;background:#15130f"></i><i class="hc" style="left:287.90px;top:197.78px;background:#15130f"></i><i class="hc" style="left:303.72px;top:197.78px;background:#15130f"></i><i class="hc" style="left:319.54px;top:197.78px;background:#15130f"></i><i class="hc" style="left:335.36px;top:197.78px;background:#15130f"></i><i class="hc" style="left:351.18px;top:197.78px;background:#15130f"></i><i class="hc" style="left:367.00px;top:197.78px;background:#15130f"></i><i class="hc" style="left:382.82px;top:197.78px;background:#15130f"></i><i class="hc" style="left:398.64px;top:197.78px;background:#15130f"></i><i class="hc" style="left:414.46px;top:197.78px;background:#15130f"></i></div>
</div>

<div class="abs" style="left:1394px;top:90px;width:6px;height:810px;background:#1c1815"></div>
<div class="abs" style="left:1394px;top:90px;width:6px;height:694px;background:#3d3833;border-radius:3px"></div>
</body>
</html>
